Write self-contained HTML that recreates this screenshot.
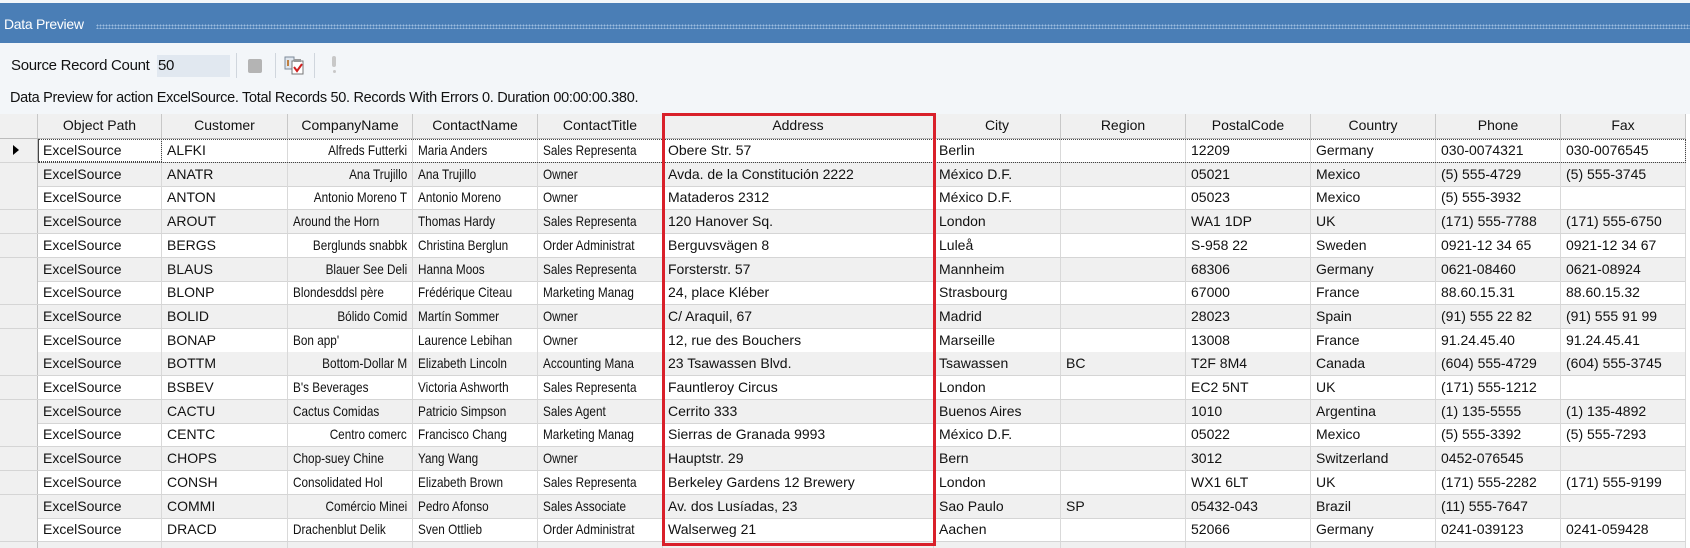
<!DOCTYPE html>
<html><head><meta charset="utf-8"><style>
*{margin:0;padding:0;box-sizing:border-box}
body{width:1690px;height:548px;overflow:hidden;background:#f3f6f9;font-family:"Liberation Sans",Arial,sans-serif;position:relative}
.bar{position:absolute;left:0;top:3px;width:1690px;height:40px;background:#4a7eb6}
.bar .t{position:absolute;left:4px;top:13px;color:#fff;font-size:14px;letter-spacing:-0.3px}
.bar .dots{position:absolute;left:96px;right:0;top:21px;height:5px;background-image:radial-gradient(circle,#9dbde0 0.8px,transparent 1px);background-size:3px 3px}
.tb{position:absolute;font-size:15px;color:#111;letter-spacing:-0.3px}
.grid{position:absolute;left:0;top:114px;width:1690px;height:434px;background:#fff;overflow:hidden}
.c{position:absolute;height:100%;border-right:1px solid #d9d9d9;overflow:hidden;white-space:nowrap;font-size:14px;color:#111;padding:0 5px}
.row{position:absolute;left:0;width:1686px;height:24px;border-bottom:1px solid #d5d5d5}
.h{background:#f0f0f0;height:25px;border-bottom:1px solid #bcbcbc}
.h .c{text-align:center;line-height:24px;border-right:1px solid #c8c8c8}
.row .c{line-height:23px}
.g{background:#f0f0f0}
.rh{background:#f0f0f0;border-right:1px solid #c0c0c0}
.n span{display:inline-block;transform:scaleX(.84);transform-origin:left}
.n.r span{transform-origin:right}
.r{text-align:right}
</style></head><body>
<div class="bar"><div class="t">Data Preview</div><div class="dots"></div></div>
<div class="tb" style="left:11px;top:57px">Source Record Count</div>
<div style="position:absolute;left:157px;top:55px;width:73px;height:22px;background:#e1e8f0"></div>
<div class="tb" style="left:158px;top:57px">50</div>
<div style="position:absolute;left:236px;top:53px;width:1px;height:25px;background:#d0d6dd"></div>
<div style="position:absolute;left:248px;top:59px;width:14px;height:14px;background:#b4b4b4;border-radius:2px"></div>
<div style="position:absolute;left:275px;top:53px;width:1px;height:25px;background:#d0d6dd"></div>
<svg style="position:absolute;left:284px;top:56px" width="22" height="20" viewBox="0 0 22 20"><rect x="1" y="1" width="9" height="12" fill="#dfe6ee" stroke="#7d8b99"/><rect x="3" y="4" width="2" height="6" fill="#c08040"/><rect x="8" y="5" width="11" height="13" fill="#fff" stroke="#777"/><rect x="10" y="3" width="7" height="3" fill="#999"/><path d="M10 11l3 4 5-7" stroke="#d02020" stroke-width="2" fill="none"/></svg>
<div style="position:absolute;left:314px;top:53px;width:1px;height:25px;background:#d0d6dd"></div>
<div style="position:absolute;left:332px;top:56px;width:4px;height:11px;background:#c8c8c8;border-radius:2px"></div>
<div style="position:absolute;left:333px;top:70px;width:3px;height:3px;background:#c8c8c8;border-radius:50%"></div>
<div class="tb" style="left:10px;top:90px;font-size:14.5px">Data Preview for action ExcelSource. Total Records 50. Records With Errors 0. Duration 00:00:00.380.</div>
<div class="grid" id="g"></div>
<div style="position:absolute;left:662px;top:113px;width:274px;height:433px;border:3px solid #d9202a"></div>
<script>
var X=[0,38,162,288,413,538,663,934,1061,1186,1311,1436,1561,1686];
var H=["","Object Path","Customer","CompanyName","ContactName","ContactTitle","Address","City","Region","PostalCode","Country","Phone","Fax"];
var D=[
["ALFKI","r:Alfreds Futterki","Maria Anders","Sales Representa","Obere Str. 57","Berlin","","12209","Germany","030-0074321","030-0076545"],
["ANATR","r:Ana Trujillo","Ana Trujillo","Owner","Avda. de la Constitución 2222","México D.F.","","05021","Mexico","(5) 555-4729","(5) 555-3745"],
["ANTON","r:Antonio Moreno T","Antonio Moreno","Owner","Mataderos  2312","México D.F.","","05023","Mexico","(5) 555-3932",""],
["AROUT","Around the Horn","Thomas Hardy","Sales Representa","120 Hanover Sq.","London","","WA1 1DP","UK","(171) 555-7788","(171) 555-6750"],
["BERGS","r:Berglunds snabbk","Christina Berglun","Order Administrat","Berguvsvägen  8","Luleå","","S-958 22","Sweden","0921-12 34 65","0921-12 34 67"],
["BLAUS","r:Blauer See Deli","Hanna Moos","Sales Representa","Forsterstr. 57","Mannheim","","68306","Germany","0621-08460","0621-08924"],
["BLONP","Blondesddsl père","Frédérique Citeau","Marketing Manag","24, place Kléber","Strasbourg","","67000","France","88.60.15.31","88.60.15.32"],
["BOLID","r:Bólido Comid","Martín Sommer","Owner","C/ Araquil, 67","Madrid","","28023","Spain","(91) 555 22 82","(91) 555 91 99"],
["BONAP","Bon app'","Laurence Lebihan","Owner","12, rue des Bouchers","Marseille","","13008","France","91.24.45.40","91.24.45.41"],
["BOTTM","r:Bottom-Dollar M","Elizabeth Lincoln","Accounting Mana","23 Tsawassen Blvd.","Tsawassen","BC","T2F 8M4","Canada","(604) 555-4729","(604) 555-3745"],
["BSBEV","B's Beverages","Victoria Ashworth","Sales Representa","Fauntleroy Circus","London","","EC2 5NT","UK","(171) 555-1212",""],
["CACTU","Cactus Comidas","Patricio Simpson","Sales Agent","Cerrito 333","Buenos Aires","","1010","Argentina","(1) 135-5555","(1) 135-4892"],
["CENTC","r:Centro comerc","Francisco Chang","Marketing Manag","Sierras de Granada 9993","México D.F.","","05022","Mexico","(5) 555-3392","(5) 555-7293"],
["CHOPS","Chop-suey Chine","Yang Wang","Owner","Hauptstr. 29","Bern","","3012","Switzerland","0452-076545",""],
["CONSH","Consolidated Hol","Elizabeth Brown","Sales Representa","Berkeley Gardens 12  Brewery","London","","WX1 6LT","UK","(171) 555-2282","(171) 555-9199"],
["COMMI","r:Comércio Minei","Pedro Afonso","Sales Associate","Av. dos Lusíadas, 23","Sao Paulo","SP","05432-043","Brazil","(11) 555-7647",""],
["DRACD","Drachenblut Delik","Sven Ottlieb","Order Administrat","Walserweg 21","Aachen","","52066","Germany","0241-039123","0241-059428"],
["DUMON","r:Du monde entier","Janine Labrune","Owner","67, rue des Cinquante Otages","Nantes","","44000","France","40.67.88.88","40.67.89.89"]];
var g=document.getElementById('g'),h='<div class="row h" style="top:0">';
for(var i=0;i<13;i++){h+='<div class="c" style="left:'+X[i]+'px;width:'+(X[i+1]-X[i])+'px">'+H[i]+'</div>';}
h+='</div>';
D.forEach(function(r,k){
 var top=25+k*23.7;
 h+='<div class="row'+(k%2?' g':'')+'" style="top:'+top+'px">';
 h+='<div class="c rh" style="left:0;width:38px">'+(k==0?'<span style="display:inline-block;margin-left:8px;width:0;height:0;border-left:6px solid #000;border-top:5px solid transparent;border-bottom:5px solid transparent"></span>':'')+'</div>';
 var cells=["ExcelSource"].concat(r);
 for(var i=0;i<12;i++){
  var v=cells[i],cls='c',s='';
  if(v.indexOf('r:')==0){v=v.slice(2);cls+=' r';}
  if(i>=2&&i<=4){cls+=' n';v='<span>'+v+'</span>';}
  if(k==0&&i==0)s='outline:1px dotted #444;outline-offset:-1px;';
  h+='<div class="'+cls+'" style="left:'+X[i+1]+'px;width:'+(X[i+2]-X[i+1])+'px;'+s+'">'+v+'</div>';
 }
 if(k==0)h+='<div style="position:absolute;left:38px;top:0;width:1648px;height:24px;border:1px dotted #444"></div>';
 h+='</div>';
});
g.innerHTML=h;
</script>
</body></html>
